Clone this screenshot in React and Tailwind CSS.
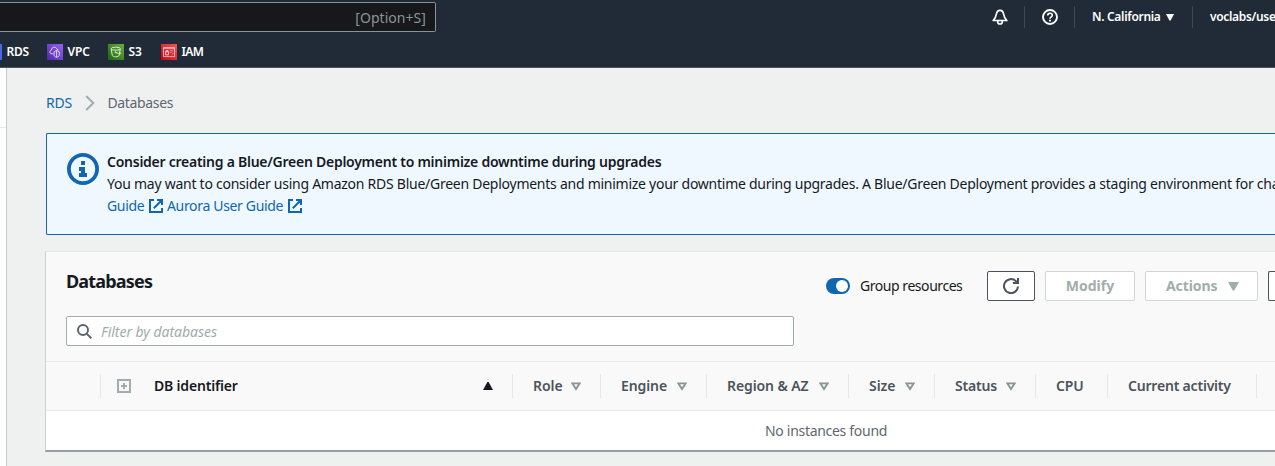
import React from 'react';

const RECENTS = [
  { label: 'VPC', Icon: VpcIcon, item: 'ml-[17px] w-[61px]', text: 'tracking-[-0.1px]' },
  { label: 'S3', Icon: S3Icon, item: 'w-[53px]', text: 'tracking-[-0.1px]' },
  { label: 'IAM', Icon: IamIcon, item: 'w-[50px]', text: 'tracking-[-0.6px]' },
];

const COLUMNS = [
  { label: 'Role', cell: 'w-[88px]', text: 'tracking-[-0.05px]', sortable: true, gap: 'pr-[19px]' },
  { label: 'Engine', cell: 'w-[106px]', text: 'tracking-[-0.1px]', sortable: true, gap: 'pr-[19px]' },
  { label: 'Region & AZ', cell: 'w-[142px]', text: 'tracking-[-0.1px]', sortable: true, gap: 'pr-[19px]' },
  { label: 'Size', cell: 'w-[86px]', text: 'tracking-[-0.05px]', sortable: true, gap: 'pr-[19px]' },
  { label: 'Status', cell: 'w-[101px]', text: 'tracking-[-0.2px]', sortable: true, gap: 'pr-[19px]' },
  { label: 'CPU', cell: 'w-[72px]', text: 'tracking-[-0.1px]', sortable: false, gap: '' },
  { label: 'Current activity', cell: 'w-[149px]', text: 'tracking-[-0.2px]', sortable: false, gap: '' },
];

function VpcIcon() {
  return (
    <svg className="size-4 shrink-0" viewBox="0 0 16 16" fill="none" stroke="#e6dcfa" strokeWidth="0.9">
      <defs>
        <linearGradient id="vpc" x1="0" y1="1" x2="1" y2="0">
          <stop offset="0" stopColor="#4d27a8" />
          <stop offset="1" stopColor="#9a62f2" />
        </linearGradient>
      </defs>
      <rect width="16" height="16" fill="url(#vpc)" stroke="none" />
      <path d="M6.300 9.800H5C3.600 9.800 2.700 9 2.900 7.800c.1-.9.8-1.400 1.600-1.600C4.500 4.300 5.600 3.200 7.200 3.200c1.500 0 2.300.8 2.600 2 .9-.1 1.500.4 1.600 1.100" />
      <path d="M9.600 6.500 12.300 7.800v3.500c0 .8-1.300 1.600-2.700 2-1.300-.4-2.500-1.200-2.500-2V7.800zM9.600 6.500v6.700" />
    </svg>
  );
}

function S3Icon() {
  return (
    <svg className="size-4 shrink-0" viewBox="0 0 16 16" fill="none" stroke="#dcecd4" strokeWidth="0.95">
      <defs>
        <linearGradient id="s3" x1="0" y1="1" x2="1" y2="0">
          <stop offset="0" stopColor="#1b660f" />
          <stop offset="1" stopColor="#6cae3e" />
        </linearGradient>
      </defs>
      <rect width="16" height="16" fill="url(#s3)" stroke="none" />
      <ellipse cx="7.700" cy="4.700" rx="4.600" ry="1.500" />
      <path d="M3.100 4.700 4.300 11.400c.2.900 1.700 1.400 3.400 1.400s3.200-.5 3.400-1.400l1.200-6.700M7.500 8.300c2 1 4.100 1.600 5 1.400.8-.2-.1-1.100-.9-1.500" />
      <circle cx="7.400" cy="8.200" r="0.500" />
    </svg>
  );
}

function IamIcon() {
  return (
    <svg className="size-4 shrink-0" viewBox="0 0 16 16" fill="none" stroke="#ffdede" strokeWidth="0.95">
      <defs>
        <linearGradient id="iam" x1="0" y1="1" x2="1" y2="0">
          <stop offset="0" stopColor="#bd0816" />
          <stop offset="1" stopColor="#ff5252" />
        </linearGradient>
      </defs>
      <rect width="16" height="16" fill="url(#iam)" stroke="none" />
      <path d="M2.500 3.800h11v8.800h-11z" opacity="0.75" />
      <path d="M2.500 4h11M4.500 7.800h3v3h-3zM5.100 7.800V6.600h1.800v1.200" />
      <path d="M9.200 6.700h2.600M9.200 8.400h1.300M11 9.800h1" opacity="0.55" />
    </svg>
  );
}

function BellIcon() {
  return (
    <svg className="size-4" viewBox="0 0 16 16" fill="none" stroke="#fff" strokeWidth="1.7" strokeLinejoin="round">
      <path d="M8 1.300C6.100 1.300 4.800 2.800 4.400 5 4 7.800 3.200 9.400 1.200 11.500h13.600C12.800 9.400 12 7.800 11.600 5 11.200 2.800 9.900 1.300 8 1.300z" />
      <path d="M5.700 11.800v.9c0 1.400 1 2.300 2.300 2.300s2.300-.9 2.300-2.300v-.9" />
    </svg>
  );
}

function HelpIcon() {
  return (
    <svg className="size-4" viewBox="0 0 16 16" fill="none" stroke="#fff" strokeWidth="1.9">
      <circle cx="8" cy="8" r="7" />
      <path d="M5.700 6.500C5.700 5 6.700 4.200 8 4.200s2.300.8 2.300 2.100c0 1.600-2.300 1.600-2.300 3.500" strokeWidth="1.6" />
      <path d="M7 10.700h2v1.800H7z" fill="#fff" stroke="none" />
    </svg>
  );
}

function ExternalIcon() {
  return (
    <svg className="size-[14px] shrink-0" viewBox="0 0 14 14" fill="none" stroke="#1166b0" strokeWidth="2">
      <path d="M5 1H1v12h12V9M8 1h5v5M13 1 4.800 9.200" />
    </svg>
  );
}

function InfoIcon() {
  return (
    <svg className="size-8 shrink-0" viewBox="0 0 32 32" fill="#1166b0">
      <circle cx="16" cy="16" r="14.100" fill="none" stroke="#1166b0" strokeWidth="3.800" />
      <path d="M14 8h4v4h-4zM12 14h6v6h2v4h-8v-4h2v-2h-2z" />
    </svg>
  );
}

function Divider({ className = '' }) {
  return <span className={`h-[22px] w-px shrink-0 bg-[#3f4853] ${className}`} />;
}

function TopNav() {
  return (
    <header className="flex h-[68px] shrink-0 flex-col border-b border-[#49525c] bg-[#212b37] text-xs font-semibold whitespace-nowrap text-white">
      <div className="flex h-[34px] shrink-0 items-start pt-[2px]">
        <div className="flex h-[30px] w-[436px] shrink-0 items-center justify-end rounded-r-[2px] border border-l-0 border-[#879596] bg-[#17181c] pr-[9px] text-sm font-normal text-[#879596]">
          <span className="pt-px tracking-[0.05px]">[Option+S]</span>
        </div>
        <div className="ml-auto flex h-[30px] shrink-0 items-center">
          <BellIcon />
          <Divider className="ml-4" />
          <span className="ml-[17px]"><HelpIcon /></span>
          <Divider className="ml-4" />
          <span className="ml-[17px] w-[69px] tracking-[-0.31px]">N. California</span>
          <svg className="ml-[5px] h-[7px] w-2" viewBox="0 0 8 7" fill="#fff"><path d="M0 0h8L4.600 6.500H3.400z" /></svg>
          <Divider className="ml-[18px]" />
          <span className="ml-[17px] w-[65px] tracking-[-0.33px]">voclabs/use</span>
        </div>
      </div>
      <nav className="flex h-[34px] shrink-0 items-center pt-[2px]">
        <span className="h-4 w-[2px] bg-[#4a67ec]" />
        <span className="ml-[4.500px] w-[23px] tracking-[-0.3px]">RDS</span>
        {RECENTS.map(({ label, Icon, item, text }) => (
          <span key={label} className={`flex shrink-0 items-center gap-[5px] ${item}`}>
            <Icon />
            <span className={text}>{label}</span>
          </span>
        ))}
      </nav>
    </header>
  );
}

function Breadcrumb() {
  return (
    <div className="flex h-[21px] items-center">
      <span className="w-[39px] tracking-[-0.25px] text-[#1166b0]">RDS</span>
      <svg className="h-4 w-[10px]" viewBox="0 0 10 16" fill="none" stroke="#a1adad" strokeWidth="2"><path d="M1.200 1 8.300 8 1.200 15" /></svg>
      <span className="ml-[12.500px] tracking-[-0.36px] text-[#5f6770]">Databases</span>
    </div>
  );
}

function Alert() {
  return (
    <section className="mt-[20px] flex h-[102px] rounded-l-[2px] border border-r-0 border-[#1166b0] bg-[#f0f8ff] pt-[17px] pl-5 leading-[22px] whitespace-nowrap">
      <span className="pt-[2px]"><InfoIcon /></span>
      <div className="ml-2">
        <p className="font-semibold tracking-[-0.255px]">Consider creating a Blue/Green Deployment to minimize downtime during upgrades</p>
        <p className="tracking-[-0.255px]">You may want to consider using Amazon RDS Blue/Green Deployments and minimize your downtime during upgrades. A Blue/Green Deployment provides a staging environment for changes</p>
        <p className="flex items-center text-[#1166b0]">
          <span className="w-[42px] tracking-[-0.33px]">Guide</span>
          <ExternalIcon />
          <span className="ml-1 w-[121px] tracking-[-0.33px]">Aurora User Guide</span>
          <ExternalIcon />
        </p>
      </div>
    </section>
  );
}

function PanelHeader() {
  return (
    <div className="flex h-[110px] flex-col border-b border-[#e7eaea] bg-[#f9f9f9] pl-5">
      <div className="flex h-[64px] pt-[19px]">
        <h2 className="-mt-px w-[760px] text-lg leading-[22px] font-bold tracking-[-0.82px]">Databases</h2>
        <div className="flex h-[30px] items-center">
          <span className="flex h-4 w-6 items-center justify-end rounded-full bg-[#1166b0] p-[2px]">
            <span className="size-3 rounded-full bg-white" />
          </span>
          <span className="ml-[10px] w-[127px] tracking-[-0.45px]">Group resources</span>
          <button className="flex h-[30px] w-12 items-center justify-center rounded-[2px] border border-[#4b535d] bg-white">
            <svg className="size-4" viewBox="0 0 16 16" fill="none" stroke="#4b535d" strokeWidth="2">
              <path d="M15 8.500A7 7 0 1 1 12.900 3.100L14.800 5" />
              <path d="M15 0v5h-5" />
            </svg>
          </button>
          <button className="ml-[10px] h-[30px] w-[90px] rounded-[2px] border border-[#d0d6d6] bg-white font-bold tracking-[0.05px] text-[#a1adad]">Modify</button>
          <button className="ml-[10px] flex h-[30px] w-[113px] items-center rounded-[2px] border border-[#d0d6d6] bg-white pl-5 font-bold tracking-[-0.1px] text-[#a1adad]">
            <span className="w-[62px] text-left">Actions</span>
            <svg className="h-[9px] w-[11px]" viewBox="0 0 11 9" fill="#a1adad"><path d="M0 0h11L6.200 8.500H4.800z" /></svg>
          </button>
          <span className="ml-[10px] h-[30px] w-[7px] rounded-l-[2px] border border-r-0 border-[#4b535d] bg-white" />
        </div>
      </div>
      <div className="flex h-[30px] w-[728px] items-center rounded-[2px] border border-[#a1adad] bg-white pl-[10px]">
        <svg className="size-[15px]" viewBox="0 0 15 15" fill="none" stroke="#5b646e" strokeWidth="2"><circle cx="6" cy="6" r="5" /><path d="m9.600 9.600 4.700 4.700" /></svg>
        <span className="ml-[9px] pt-[2px] tracking-[-0.03px] text-[#a1adad] italic">Filter by databases</span>
      </div>
    </div>
  );
}

function TableHead() {
  return (
    <div className="flex h-[49px] items-center border-b border-[#e7eaea] bg-[#f9f9f9] pl-[54px] font-semibold whitespace-nowrap text-[#4b535d]">
      <div className="flex h-6 w-[412px] shrink-0 items-center border-l border-[#e4e8e8] pl-4 text-[#16191f]">
        <svg className="size-[14px]" viewBox="0 0 14 14" fill="none" stroke="#a1adad" strokeWidth="2"><path d="M1 1h12v12H1zM4 7h6M7 4v6" /></svg>
        <span className="ml-[23px] w-[328.500px] tracking-[-0.18px]">DB identifier</span>
        <svg className="h-2 w-[10px]" viewBox="0 0 10 8" fill="#16191f"><path d="M0 8h10L5.600 0H4.400z" /></svg>
      </div>
      {COLUMNS.map(({ label, cell, text, sortable, gap }) => (
        <div key={label} className={`flex h-6 shrink-0 items-center justify-between border-l border-[#e4e8e8] pl-5 ${cell} ${gap}`}>
          <span className={text}>{label}</span>
          {sortable && (
            <svg className="h-[9px] w-[10px]" viewBox="0 0 10 9" fill="none" stroke="#879596" strokeWidth="1.800"><path d="M1.300 1.300h7.400L5 7z" /></svg>
          )}
        </div>
      ))}
      <span className="h-6 w-px shrink-0 bg-[#e4e8e8]" />
    </div>
  );
}

export default function App() {
  return (
    <div className="flex h-[466px] w-full flex-col overflow-hidden bg-[#eff1f1] font-['Noto_Sans','Open_Sans',sans-serif] text-sm text-[#16191f]">
      <TopNav />
      <div className="flex min-h-0 flex-1">
        <aside className="w-[7px] shrink-0 border-r border-[#c5cbcb] bg-white">
          <div className="h-[60px] border-b border-[#e7eaea]" />
        </aside>
        <main className="min-w-0 flex-1 overflow-hidden pt-6 pl-[38px]">
          <div className="pl-px"><Breadcrumb /><Alert /></div>
          <section className="mt-4 h-[201px] border-t border-b-2 border-l border-t-[#e4e8e8] border-b-[#96a0a2] border-l-[#ccd1d1] bg-white">
            <PanelHeader />
            <TableHead />
            <div className="flex h-10 items-center pl-[719px] tracking-[-0.3px] text-[#5f6770]">No instances found</div>
          </section>
        </main>
      </div>
    </div>
  );
}
